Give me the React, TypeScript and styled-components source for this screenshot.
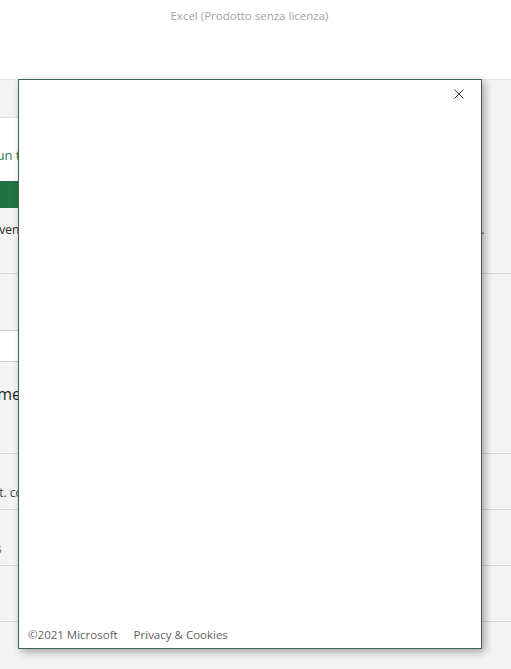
import React from "react";
import styled, { createGlobalStyle } from "styled-components";

const GlobalStyle = createGlobalStyle`
  html, body {
    margin: 0;
    padding: 0;
    height: 100%;
    overflow: hidden;
  }
  body {
    font-family: "Open Sans", "Noto Sans", "Liberation Sans", sans-serif;
    color: #262626;
    background: #ffffff;
  }
`;

const Page = styled.div`
  position: relative;
  height: 100vh;
  display: flex;
  flex-direction: column;
`;

const TitleBar = styled.header`
  height: 79px;
  flex-shrink: 0;
  display: flex;
  justify-content: center;
  padding: 8px 12px 0 0;
  box-sizing: border-box;
  background: #ffffff;
`;

const Title = styled.span`
  font-size: 11.5px;
  line-height: 16px;
  color: #a3a3a3;
`;

const Workspace = styled.main`
  flex: 1;
  display: flex;
  justify-content: center;
  overflow: hidden;
  background: #f3f3f3;
  border-top: 1px solid #e6e6e6;
`;

const Column = styled.div`
  width: 660px;
  flex-shrink: 0;
  padding-top: 37px;
  display: flex;
  flex-direction: column;
`;

const Card = styled.section`
  width: 540px;
  background: #ffffff;
  border-top: 1px solid #e1e1e1;
  padding-top: 28px;
  display: flex;
  flex-direction: column;
`;

const Lead = styled.p<{ $indent: number }>`
  margin: 0 0 17px;
  padding-left: ${(p) => p.$indent}px;
  font-size: 13px;
  line-height: 18px;
  color: #2f7a52;
  white-space: nowrap;
`;

const PrimaryButton = styled.button`
  height: 27px;
  border: none;
  background: #217346;
  color: #ffffff;
  font: inherit;
  font-size: 13px;
`;

const InfoRow = styled.div`
  height: 66px;
  padding: 13px 101px 0 52px;
  box-sizing: border-box;
  display: flex;
  justify-content: space-between;
  border-bottom: 1px solid #d6d6d6;
  font-size: 12px;
  line-height: 18px;
  color: #262626;
  white-space: nowrap;
`;

const Field = styled.div`
  width: 520px;
  height: 30px;
  margin-top: 56px;
  background: #ffffff;
  border-top: 1px solid #c9c9c9;
  border-bottom: 1px solid #c9c9c9;
`;

const Heading = styled.h2<{ $indent: number }>`
  margin: 0;
  height: 92px;
  padding: 22px 0 0 ${(p) => p.$indent}px;
  box-sizing: border-box;
  border-bottom: 1px solid #d6d6d6;
  font-size: 16px;
  font-weight: 400;
  line-height: 20px;
  color: #262626;
  white-space: nowrap;
`;

const LinkRow = styled.div<{ $indent: number }>`
  height: 56px;
  padding: 31px 0 0 ${(p) => p.$indent}px;
  box-sizing: border-box;
  border-bottom: 1px solid #d6d6d6;
  font-size: 12px;
  line-height: 16px;
  color: #444444;
  white-space: nowrap;
`;

const Dialog = styled.div`
  position: absolute;
  left: 18px;
  top: 79px;
  width: 464px;
  height: 570px;
  box-sizing: border-box;
  background: #ffffff;
  border: 1px solid #3a654f;
  box-shadow: 3px 3px 8px rgba(0, 0, 0, 0.32);
  display: flex;
  flex-direction: column;
`;

const DialogHeader = styled.div`
  display: flex;
  justify-content: flex-end;
  padding: 9px 17px 0 0;
`;

const CloseButton = styled.button`
  width: 10px;
  height: 10px;
  padding: 0;
  border: none;
  background: transparent;
  display: flex;
  cursor: pointer;
`;

const DialogBody = styled.div`
  flex: 1;
`;

const DialogFooter = styled.footer`
  display: flex;
  gap: 16px;
  padding: 0 0 5px 9px;
  font-size: 11.5px;
  line-height: 16px;
  color: #5e5e5e;
`;

const FooterLink = styled.a`
  color: inherit;
  text-decoration: none;
`;

const App: React.FC = () => {
  return (
    <Page>
      <GlobalStyle />
      <TitleBar>
        <Title>Excel (Prodotto senza licenza)</Title>
      </TitleBar>
      <Workspace>
        <Column>
          <Card>
            <Lead $indent={3}>Accedi con un tuo account Microsoft</Lead>
            <PrimaryButton>Accedi</PrimaryButton>
          </Card>
          <InfoRow>
            <span>Benvenuto in Excel</span>
            <span>Usa l'app con il tuo account.</span>
          </InfoRow>
          <Field />
          <Heading $indent={52}>Come iniziare</Heading>
          <LinkRow $indent={25}>Microsoft. condizioni d'uso</LinkRow>
          <LinkRow $indent={25}>Windows</LinkRow>
          <LinkRow $indent={25} />
        </Column>
      </Workspace>

      <Dialog role="dialog">
        <DialogHeader>
          <CloseButton aria-label="Chiudi">
            <svg width="10" height="10" viewBox="0 0 10 10">
              <path d="M0.5 0.5L9.5 9.5M9.5 0.5L0.5 9.5" stroke="#333" strokeWidth="1" fill="none" />
            </svg>
          </CloseButton>
        </DialogHeader>
        <DialogBody />
        <DialogFooter>
          <span>©2021 Microsoft</span>
          <FooterLink href="#">Privacy &amp; Cookies</FooterLink>
        </DialogFooter>
      </Dialog>
    </Page>
  );
};

export default App;
